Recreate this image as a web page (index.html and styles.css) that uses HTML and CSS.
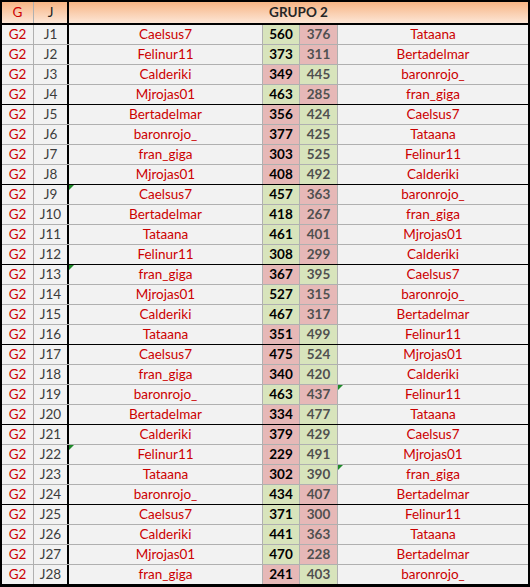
FILE: index.html
```html
<!DOCTYPE html>
<html>
<head>
<meta charset="utf-8">
<link rel="stylesheet" href="styles.css">
</head>
<body>
<div class="sheet">
  <div class="row head"><div class="c g">G</div><div class="c j">J</div><div class="c title">GRUPO 2</div></div>
  <div class="row"><div class="c g">G2</div><div class="c j">J1</div><div class="c n">Caelsus7</div><div class="c s a w">560</div><div class="c s b l">376</div><div class="c n">Tataana</div></div>
  <div class="row"><div class="c g">G2</div><div class="c j">J2</div><div class="c n">Felinur11</div><div class="c s a w">373</div><div class="c s b l">311</div><div class="c n">Bertadelmar</div></div>
  <div class="row"><div class="c g">G2</div><div class="c j">J3</div><div class="c n">Calderiki</div><div class="c s a l">349</div><div class="c s b w">445</div><div class="c n">baronrojo_</div></div>
  <div class="row end"><div class="c g">G2</div><div class="c j">J4</div><div class="c n">Mjrojas01</div><div class="c s a w">463</div><div class="c s b l">285</div><div class="c n">fran_giga</div></div>
  <div class="row"><div class="c g">G2</div><div class="c j">J5</div><div class="c n">Bertadelmar</div><div class="c s a l">356</div><div class="c s b w">424</div><div class="c n">Caelsus7</div></div>
  <div class="row"><div class="c g">G2</div><div class="c j">J6</div><div class="c n">baronrojo_</div><div class="c s a l">377</div><div class="c s b w">425</div><div class="c n">Tataana</div></div>
  <div class="row"><div class="c g">G2</div><div class="c j">J7</div><div class="c n">fran_giga</div><div class="c s a l">303</div><div class="c s b w">525</div><div class="c n">Felinur11</div></div>
  <div class="row end"><div class="c g">G2</div><div class="c j">J8</div><div class="c n">Mjrojas01</div><div class="c s a l">408</div><div class="c s b w">492</div><div class="c n">Calderiki</div></div>
  <div class="row"><div class="c g">G2</div><div class="c j">J9</div><div class="c n mark">Caelsus7</div><div class="c s a w">457</div><div class="c s b l">363</div><div class="c n">baronrojo_</div></div>
  <div class="row"><div class="c g">G2</div><div class="c j">J10</div><div class="c n">Bertadelmar</div><div class="c s a w">418</div><div class="c s b l">267</div><div class="c n">fran_giga</div></div>
  <div class="row"><div class="c g">G2</div><div class="c j">J11</div><div class="c n">Tataana</div><div class="c s a w">461</div><div class="c s b l">401</div><div class="c n">Mjrojas01</div></div>
  <div class="row end"><div class="c g">G2</div><div class="c j">J12</div><div class="c n">Felinur11</div><div class="c s a w">308</div><div class="c s b l">299</div><div class="c n">Calderiki</div></div>
  <div class="row"><div class="c g">G2</div><div class="c j">J13</div><div class="c n mark">fran_giga</div><div class="c s a l">367</div><div class="c s b w">395</div><div class="c n">Caelsus7</div></div>
  <div class="row"><div class="c g">G2</div><div class="c j">J14</div><div class="c n">Mjrojas01</div><div class="c s a w">527</div><div class="c s b l">315</div><div class="c n">baronrojo_</div></div>
  <div class="row"><div class="c g">G2</div><div class="c j">J15</div><div class="c n">Calderiki</div><div class="c s a w">467</div><div class="c s b l">317</div><div class="c n">Bertadelmar</div></div>
  <div class="row end"><div class="c g">G2</div><div class="c j">J16</div><div class="c n">Tataana</div><div class="c s a l">351</div><div class="c s b w">499</div><div class="c n">Felinur11</div></div>
  <div class="row"><div class="c g">G2</div><div class="c j">J17</div><div class="c n">Caelsus7</div><div class="c s a l">475</div><div class="c s b w">524</div><div class="c n">Mjrojas01</div></div>
  <div class="row"><div class="c g">G2</div><div class="c j">J18</div><div class="c n">fran_giga</div><div class="c s a l">340</div><div class="c s b w">420</div><div class="c n">Calderiki</div></div>
  <div class="row"><div class="c g">G2</div><div class="c j">J19</div><div class="c n">baronrojo_</div><div class="c s a w">463</div><div class="c s b l">437</div><div class="c n mark">Felinur11</div></div>
  <div class="row end"><div class="c g">G2</div><div class="c j">J20</div><div class="c n">Bertadelmar</div><div class="c s a l">334</div><div class="c s b w">477</div><div class="c n">Tataana</div></div>
  <div class="row"><div class="c g">G2</div><div class="c j">J21</div><div class="c n">Calderiki</div><div class="c s a l">379</div><div class="c s b w">429</div><div class="c n">Caelsus7</div></div>
  <div class="row"><div class="c g">G2</div><div class="c j">J22</div><div class="c n mark">Felinur11</div><div class="c s a l">229</div><div class="c s b w">491</div><div class="c n">Mjrojas01</div></div>
  <div class="row"><div class="c g">G2</div><div class="c j">J23</div><div class="c n">Tataana</div><div class="c s a l">302</div><div class="c s b w">390</div><div class="c n mark">fran_giga</div></div>
  <div class="row end"><div class="c g">G2</div><div class="c j">J24</div><div class="c n">baronrojo_</div><div class="c s a w">434</div><div class="c s b l">407</div><div class="c n">Bertadelmar</div></div>
  <div class="row"><div class="c g">G2</div><div class="c j">J25</div><div class="c n">Caelsus7</div><div class="c s a w">371</div><div class="c s b l">300</div><div class="c n">Felinur11</div></div>
  <div class="row"><div class="c g">G2</div><div class="c j">J26</div><div class="c n">Calderiki</div><div class="c s a w">441</div><div class="c s b l">363</div><div class="c n">Tataana</div></div>
  <div class="row"><div class="c g">G2</div><div class="c j">J27</div><div class="c n">Mjrojas01</div><div class="c s a w">470</div><div class="c s b l">228</div><div class="c n">Bertadelmar</div></div>
  <div class="row end"><div class="c g">G2</div><div class="c j">J28</div><div class="c n">fran_giga</div><div class="c s a l">241</div><div class="c s b w">403</div><div class="c n">baronrojo_</div></div>
</div>
</body>
</html>
```
FILE: styles.css
```css
* { box-sizing: border-box; }
html, body { margin: 0; padding: 0; background: #ffffff; }
.sheet {
  width: 530px;
  border: 2px solid #000;
  font-family: Lato, "Liberation Sans", Arial, sans-serif;
  font-size: 13.5px;
  background: #f2f2f2;
}
.row {
  display: grid;
  grid-template-columns: 32px 35px 194px 37px 38px 190px;
  height: 20px;
  border-bottom: 1px solid #b0b0b0;
}
.row.end { border-bottom-color: #000; }
.row.head {
  grid-template-columns: 32px 35px 459px;
  height: 23px;
  border-bottom: 2px solid #000;
  background: linear-gradient(to bottom, #f7b584 0%, #fad0b2 55%, #fde6d6 100%);
}
.c {
  display: flex;
  align-items: center;
  justify-content: center;
  line-height: 1;
  border-right: 1px solid #b0b0b0;
  position: relative;
  white-space: nowrap;
}
.c.g { color: #cc0000; }
.c.j { color: #3c3c3c; border-right: 2px solid #000; }
.head .c.j { color: #222; }
.c.title { border-right: none; font-weight: bold; color: #262626; }
.c.n { color: #cc0000; }
.row > .c:last-child { border-right: none; }
.c.s { font-weight: bold; }
.c.a { color: #000; }
.c.b { color: #505050; }
.c.w { background: #d8e4bc; }
.c.l { background: #e6b8b7; }
.mark::before {
  content: "";
  position: absolute;
  top: 0;
  left: 0;
  border-top: 5px solid #1f8a2a;
  border-right: 5px solid transparent;
}
```
